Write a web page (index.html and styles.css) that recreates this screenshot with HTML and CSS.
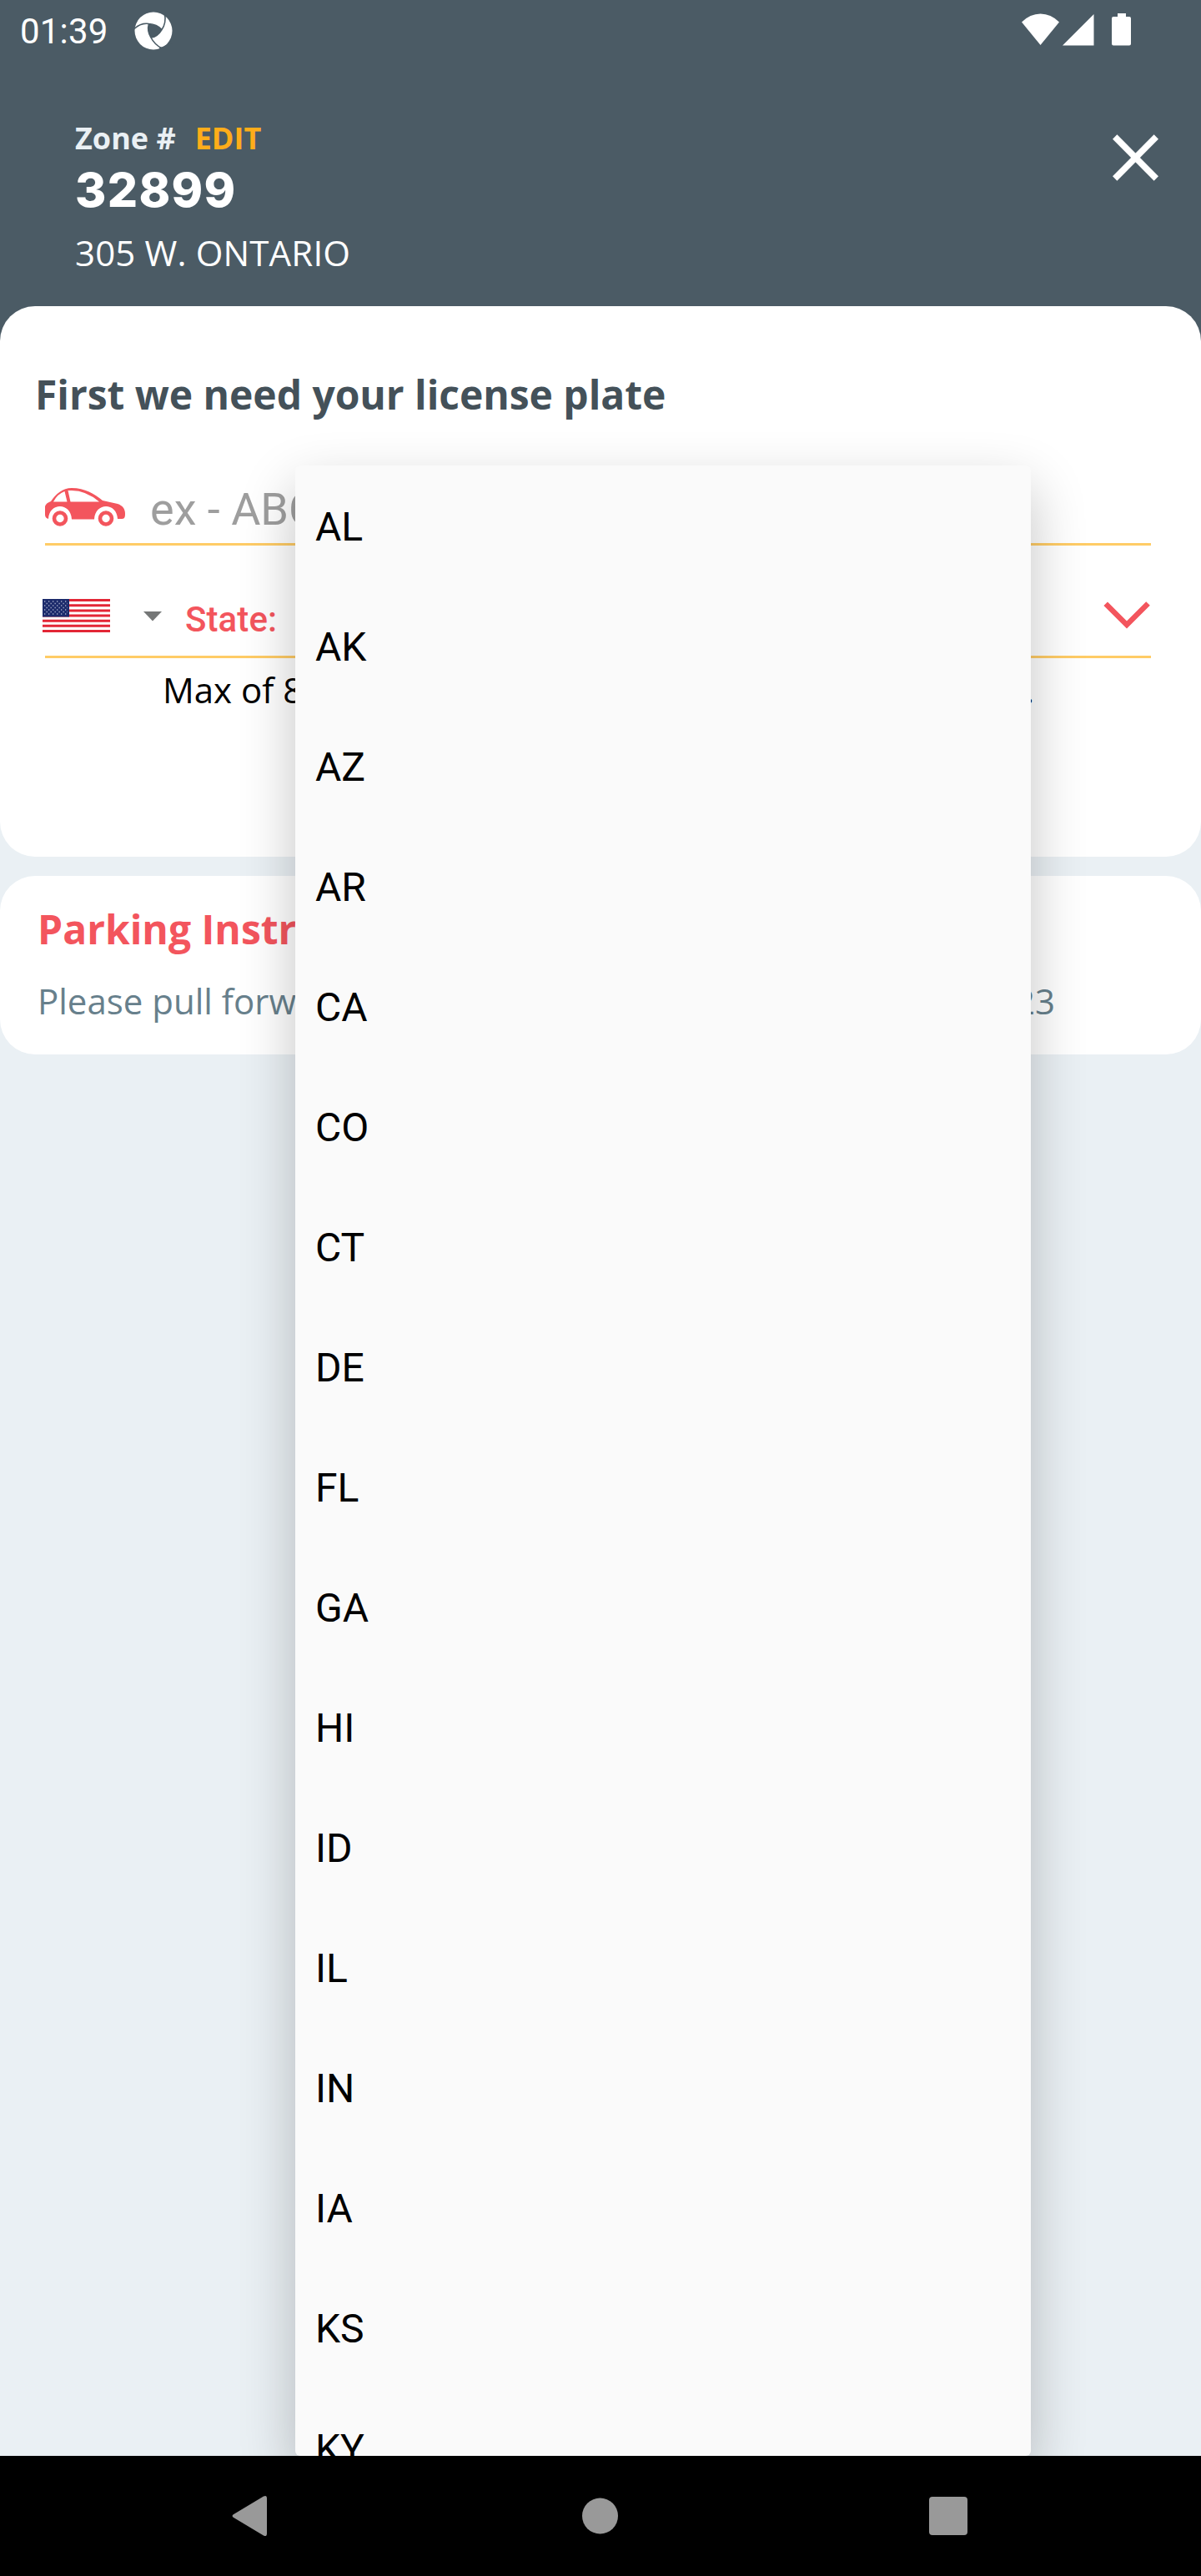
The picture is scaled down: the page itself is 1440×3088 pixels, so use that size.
FILE: index.html
```html
<!DOCTYPE html>
<html lang="en">
<head>
<meta charset="utf-8">
<title>License plate</title>
<link rel="stylesheet" href="styles.css">
</head>
<body>
<div class="screen">
  <header class="header">
    <div class="statusbar">
      <span class="clock">01:39</span>
      <svg class="app-mark" width="46" height="46" viewBox="0 0 46 46">
        <circle cx="23" cy="23" r="22.500" fill="#fff"/>
        <g fill="none" stroke="#4b5b65" stroke-width="1.600">
          <path d="M0 20.500Q8 13 17.500 14.500Q27 15 33 21.500"/>
          <path d="M36.500 2Q38.500 14 33 21.500Q28 30 20 31"/>
          <path d="M33 44Q24 39 20 31Q15 23 17.500 14.500"/>
        </g>
        <path d="M17.500 14.500Q27 15 33 21.500Q28 30 20 31Q15 23 17.500 14.500Z" fill="#4b5b65"/>
        <path d="M35.500 0L37.500 6L46 0ZM20 32Q26 41 37 41.500L46 36V46H32Q24 43 20 32Z" fill="#4b5b65" fill-opacity="0"/>
        <path d="M31 46L30 43Q35 42 39 39.500L46 38V46Z" fill="#4b5b65"/>
      </svg>
      <svg class="system-icons" width="132" height="40" viewBox="0 0 132 40" fill="#fff">
        <path d="M0 10.500Q10 .5 22.500 .5T45 10.500L22.500 38Z"/>
        <path d="M49 38.500L86.500 1V38.500Z"/>
        <path d="M115 0H125V4H129Q131 4 131 6V36.500Q131 38.500 129 38.500H110Q108 38.500 108 36.500V6Q108 4 110 4H115Z"/>
      </svg>
    </div>
    <div class="zone">
      <div>
        <div class="zone-label"><span>Zone #</span><a class="edit">EDIT</a></div>
        <div class="zone-number">32899</div>
        <div class="zone-address">305 W. ONTARIO</div>
      </div>
      <svg class="close" width="58" height="58" viewBox="0 0 58 58"><path d="M3.700 4L53.300 54M53.300 4L3.700 54" stroke="#fff" stroke-width="7.500"/></svg>
    </div>
  </header>

  <main class="content">
    <section class="card plate-card">
      <h1>First we need your license plate</h1>
      <div class="field plate-field">
        <svg class="car" width="96" height="46" viewBox="0 0 96 46">
          <path fill="#f3555d" fill-rule="evenodd" d="M7 16C13 7 21 0 32 0C48 0 59 7 69 15L87 19C93 21 96 25 96 31C96 36 95 37 91 37H87C86 17 60 17 59 37.500H32C31 17 5 17 4 37Q0 36 0 32V22Q1 18 7 16ZM10 16.500H26.500L23.500 4Q15 7 10 16.500ZM27.500 3L30.500 16.500H65Q49 3 32 3Z"/>
          <g fill="none" stroke="#f3555d" stroke-width="4.600"><circle cx="18" cy="36.500" r="7"/><circle cx="73" cy="36.500" r="7"/></g>
        </svg>
        <span class="placeholder">ex - ABC123</span>
      </div>
      <div class="field state-field">
        <svg class="flag" width="81" height="40" viewBox="0 0 81 40">
          <rect width="81" height="40" fill="#fff"/>
          <path d="M0 1.500H81M0 7.700H81M0 13.900H81M0 20H81M0 26.200H81M0 32.300H81M0 38.500H81" stroke="#e32636" stroke-width="3"/>
          <rect width="32" height="21.500" fill="#1c2b6b"/>
          <path d="M2 3H31M2 8H31M2 13H31M2 18H31" stroke="#a4acc8" stroke-width="1.300" stroke-dasharray="1.300 3.700"/>
          <path d="M4.500 5.500H30M4.500 10.500H30M4.500 15.500H30" stroke="#a4acc8" stroke-width="1.300" stroke-dasharray="1.300 3.700"/>
        </svg>
        <svg class="caret" width="22" height="12" viewBox="0 0 22 12"><path d="M0 0H22L11 11.500Z" fill="#757777"/></svg>
        <span class="state-label">State:</span>
        <svg class="chevron" width="56" height="34" viewBox="0 0 56 34"><path d="M2.700 3.700L28 29L53.500 3.500" fill="none" stroke="#f3555d" stroke-width="6.500"/></svg>
      </div>
      <p class="hint"><span>Max of 8</span><span>.</span></p>
    </section>
    <section class="card info-card">
      <h2>Parking Instructions</h2>
      <p class="info"><span>Please pull forward</span><span>23</span></p>
    </section>
  </main>

  <ul class="state-menu">
    <li>AL</li><li>AK</li><li>AZ</li><li>AR</li><li>CA</li><li>CO</li><li>CT</li><li>DE</li><li>FL</li><li>GA</li><li>HI</li><li>ID</li><li>IL</li><li>IN</li><li>IA</li><li>KS</li><li>KY</li>
  </ul>

  <nav class="navbar">
    <svg width="50" height="50" viewBox="0 0 50 50"><path d="M6 22.500L41 1.500Q45 -.5 45 4V46Q45 50.500 41 48.500L6 27.500Q1 25 6 22.500Z" fill="#999"/></svg>
    <svg width="50" height="50" viewBox="0 0 50 50"><circle cx="25.500" cy="25" r="21.500" fill="#999"/></svg>
    <svg width="50" height="50" viewBox="0 0 50 50"><rect x="2" y="2" width="46" height="46" rx="4" fill="#999"/></svg>
  </nav>
</div>
</body>
</html>
```
FILE: styles.css
```css
* { box-sizing: border-box; }
body { margin: 0; }
h1, h2, p, ul { margin: 0; padding: 0; }
svg { display: block; flex: none; }

.screen {
  position: relative;
  display: flex;
  flex-direction: column;
  width: 1440px;
  height: 3088px;
  overflow: hidden;
  background: #eaf0f4;
  font-family: "Open Sans", "Noto Sans", sans-serif;
}

.header {
  height: 430px;
  flex: none;
  background: #4b5b65;
  color: #fff;
}
.statusbar {
  display: flex;
  align-items: center;
  height: 74px;
  padding: 0 83px 0 24px;
}
.clock {
  width: 137px;
  padding-top: 2px;
  font: 42px/50px Roboto, sans-serif;
  letter-spacing: .2px;
}
.system-icons {
  margin-left: auto;
  margin-bottom: 2px;
}
.zone {
  display: flex;
  justify-content: space-between;
  padding: 67px 49px 0 90px;
}
.zone-label {
  display: flex;
  gap: 23px;
  font-size: 36px;
  font-weight: 700;
  line-height: 50px;
  color: #eaf0f4;
}
.edit { color: #ffad1a; }
.zone-number {
  padding-top: 2px;
  font: 800 57px/70px Inter, sans-serif;
  letter-spacing: 1.3px;
}
.zone-address {
  padding-top: 11px;
  font-size: 42px;
  line-height: 58px;
  letter-spacing: .15px;
}
.close { margin-top: 19px; }

.content {
  display: flex;
  flex-direction: column;
  gap: 23px;
  margin-top: -63px;
}
.card {
  background: #fff;
  border-radius: 42px;
}
.plate-card { height: 660px; }
h1 {
  padding: 73px 42px 0;
  font-size: 48px;
  line-height: 66px;
  letter-spacing: -.04px;
  color: #445159;
}
.field {
  display: flex;
  align-items: center;
  margin: 0 60px 0 54px;
  border-bottom: 3px solid #ffcc66;
}
.plate-field {
  height: 103px;
  margin-top: 45px;
}
.car { margin-top: 14px; }
.placeholder {
  padding: 20px 0 0 30px;
  font: 54px/64px Roboto, sans-serif;
  color: #9e9e9e;
}
.state-field { height: 135px; }
.flag, .caret, .state-label, .chevron { align-self: flex-start; }
.flag { margin: 64px 0 0 -3px; }
.caret { margin: 79px 0 0 40px; }
.state-label {
  margin: 64px 0 0 28px;
  font: 500 42px/50px Roboto, sans-serif;
  letter-spacing: .1px;
  color: #f3555d;
}
.chevron { margin: 66px 1px 0 auto; }
.hint {
  display: flex;
  justify-content: space-between;
  margin: 9px 200px 0 195px;
  font-size: 42px;
  line-height: 58px;
  color: #000;
}

.info-card {
  height: 214px;
  padding: 31px 175px 0 45px;
}
h2 {
  font-size: 48px;
  line-height: 66px;
  color: #f3555d;
}
.info {
  display: flex;
  justify-content: space-between;
  padding-top: 24px;
  font-size: 42px;
  line-height: 58px;
  color: #67808c;
}

.state-menu {
  position: absolute;
  left: 354px;
  top: 558px;
  width: 882px;
  height: 2386px;
  padding-top: 2px;
  overflow: hidden;
  list-style: none;
  border-radius: 6px;
  background: #fafafa;
  box-shadow: 0 26px 66px rgba(0, 0, 0, .24);
  font: 48px/144px Roboto, sans-serif;
  color: #000;
}
.state-menu li {
  height: 144px;
  padding-left: 24px;
}

.navbar {
  position: relative;
  display: flex;
  justify-content: space-between;
  align-items: center;
  height: 144px;
  margin-top: auto;
  padding: 0 278px 0 275px;
  background: #000;
}
```
